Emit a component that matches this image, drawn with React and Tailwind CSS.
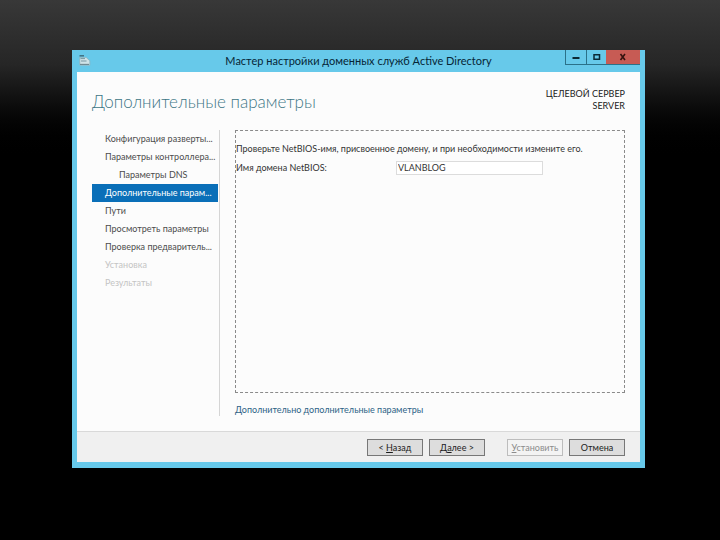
import React from 'react';

const steps = [
  { label: 'Конфигурация разверты...' },
  { label: 'Параметры контроллера...' },
  { label: 'Параметры DNS', nested: true },
  { label: 'Дополнительные парам...', active: true },
  { label: 'Пути' },
  { label: 'Просмотреть параметры' },
  { label: 'Проверка предваритель...' },
  { label: 'Установка', disabled: true },
  { label: 'Результаты', disabled: true },
];

const stepClass = (step) => {
  if (step.active) return 'bg-[#0a6fb8] text-white';
  if (step.disabled) return 'text-[#c4c4c4]';
  return 'text-[#4c4c4c]';
};

const WizardIcon = () => (
  <svg width="12" height="12" viewBox="0 0 12 12" aria-hidden="true">
    <path d="M0.5 1h4.5v1.6h-4.5z" fill="#3f7487" />
    <path d="M0.8 3.4h6.4l3.6 3.4v4.4H0.8z" fill="#cfe3e8" stroke="#8fb0ba" strokeWidth="0.7" />
    <path d="M1.5 4.6h4.5M2 7h5.5" stroke="#6d8f9b" strokeWidth="0.9" />
    <path d="M1 10.4h9" stroke="#6c868f" strokeWidth="1.1" />
  </svg>
);

const TitleBar = () => (
  <header className="grid h-[22px] grid-cols-[75px_1fr_75px] items-start">
    <div className="pt-1 pl-[2px]">
      <WizardIcon />
    </div>
    <h1 className="text-center text-[11px] leading-[22px] whitespace-nowrap text-[#062636]">
      Мастер настройки доменных служб Active Directory
    </h1>
    <div className="flex h-[15px] justify-end border-b border-[#2b7189]">
      <button type="button" aria-label="Свернуть" className="flex w-[21px] items-center justify-center border-l border-[#2b7189]">
        <svg width="8" height="8" viewBox="0 0 8 8"><path d="M0.5 5h7" stroke="#0b2936" strokeWidth="2" /></svg>
      </button>
      <button type="button" aria-label="Развернуть" className="flex w-5 items-center justify-center border-l border-[#2b7189]">
        <svg width="8" height="8" viewBox="0 0 8 8"><path d="M1 1.75h5.5v4.5H1z" fill="none" stroke="#0b2936" strokeWidth="1.5" /></svg>
      </button>
      <button type="button" aria-label="Закрыть" className="flex w-[34px] items-center justify-center bg-[#c75b54]">
        <svg width="8" height="8" viewBox="0 0 8 8"><path d="M1.5 1l4.5 6M6 1l-4.5 6" stroke="#35130f" strokeWidth="1.6" /></svg>
      </button>
    </div>
  </header>
);

const WizardButton = ({ children, disabled }) => (
  <button
    type="button"
    disabled={disabled}
    className={`h-[17px] w-14 border text-[9px] leading-[15px] whitespace-nowrap ${
      disabled ? 'border-[#bdbdbd] bg-[#f3f3f3] text-[#8c8c8c]' : 'border-[#777777] bg-[#dddddd] text-[#1c1c1c]'
    }`}
  >
    {children}
  </button>
);

const App = () => {
  return (
    <div className="min-h-screen bg-black bg-linear-to-b from-[#383838] from-0% via-[#262626] via-12% to-black to-30% pt-[50px] pr-[75px] pb-[72px] pl-[72px] font-['Lato','Open_Sans',sans-serif]">
      <div className="bg-[#67c9ea] px-[5px] pb-[6px]">
        <TitleBar />

        <main className="bg-[#fcfcfc] px-[15px] pb-[15px]">
          <div className="flex items-start justify-between pt-4">
            <h2 className="text-[17px] leading-7 font-light text-[#3d7585]">Дополнительные параметры</h2>
            <p className="text-right text-[9px] leading-3 text-[#222222]">
              ЦЕЛЕВОЙ СЕРВЕР
              <br />
              SERVER
            </p>
          </div>

          <div className="flex gap-[15px] pt-[14px]">
            <nav className="w-32 shrink-0 border-r border-[#d5d5d5] pr-px">
              <ul>
                {steps.map((step) => (
                  <li
                    key={step.label}
                    aria-current={step.active ? 'step' : undefined}
                    className={`text-[9px] leading-[18px] whitespace-nowrap ${step.nested ? 'pl-[27px]' : 'pl-[13px]'} ${stepClass(step)}`}
                  >
                    {step.label}
                  </li>
                ))}
              </ul>
            </nav>

            <div className="min-w-0 flex-1">
              <section className="min-h-[263px] border border-dashed border-[#8a8a8a] pt-[11px] text-[9px] leading-[14px] text-[#333333]">
                <p>Проверьте NetBIOS-имя, присвоенное домену, и при необходимости измените его.</p>
                <div className="flex items-center pt-[5px]">
                  <label htmlFor="netbios" className="w-40 shrink-0">Имя домена NetBIOS:</label>
                  <input
                    id="netbios"
                    type="text"
                    defaultValue="VLANBLOG"
                    className="h-[14px] w-[147px] border border-[#dcdcdc] bg-white px-px text-[9px] text-[#333333] outline-none"
                  />
                </div>
              </section>
              <a href="#more" className="mt-[11px] block text-[9px] leading-3 text-[#2c6286]">
                Дополнительно дополнительные параметры
              </a>
            </div>
          </div>
        </main>

        <footer className="flex justify-end gap-[6px] border-t border-[#d9d9d9] bg-[#f0f0f0] pt-[7px] pr-[15px] pb-[6px]">
          <WizardButton>&lt; <u>Н</u>азад</WizardButton>
          <WizardButton>Д<u>а</u>лее &gt;</WizardButton>
          <div className="w-[10px]" />
          <WizardButton disabled><u>У</u>становить</WizardButton>
          <WizardButton>Отмена</WizardButton>
        </footer>
      </div>
    </div>
  );
};

export default App;
